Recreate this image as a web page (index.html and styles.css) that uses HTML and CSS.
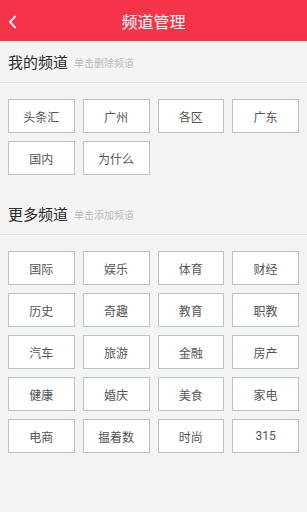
FILE: index.html
```html
<!DOCTYPE html>
<html lang="zh-CN">
<head>
    <meta charset="UTF-8">
    <meta name="viewport" content="width=device-width, initial-scale=1.0">
    <title>频道管理</title>
    <link rel="stylesheet" href="styles.css">
</head>
<body>

    <div class="topbar">
        <span class="back">
            <svg width="9" height="14" viewBox="0 0 9 14"><path d="M7.5 1.2 L2 7 L7.5 12.8" fill="none" stroke="#fff" stroke-width="1.8"/></svg>
        </span>
        <h1>频道管理</h1>
    </div>

    <div class="section-title">
        <span class="name">我的频道</span>
        <span class="hint">单击删除频道</span>
    </div>
    <div class="grid mine">
        <div class="tag">头条汇</div>
        <div class="tag">广州</div>
        <div class="tag">各区</div>
        <div class="tag">广东</div>
        <div class="tag">国内</div>
        <div class="tag">为什么</div>
    </div>

    <div class="section-title">
        <span class="name">更多频道</span>
        <span class="hint">单击添加频道</span>
    </div>
    <div class="grid">
        <div class="tag">国际</div>
        <div class="tag">娱乐</div>
        <div class="tag">体育</div>
        <div class="tag">财经</div>
        <div class="tag">历史</div>
        <div class="tag">奇趣</div>
        <div class="tag">教育</div>
        <div class="tag">职教</div>
        <div class="tag">汽车</div>
        <div class="tag">旅游</div>
        <div class="tag">金融</div>
        <div class="tag">房产</div>
        <div class="tag">健康</div>
        <div class="tag">婚庆</div>
        <div class="tag">美食</div>
        <div class="tag">家电</div>
        <div class="tag">电商</div>
        <div class="tag">揾着数</div>
        <div class="tag">时尚</div>
        <div class="tag">315</div>
    </div>

</body>
</html>
```

FILE: styles.css
```css
body {
    margin: 0;
    font-family: Roboto, "Noto Sans CJK SC", sans-serif;
    background-color: #f4f4f4;
    color: #333;
}

.topbar {
    position: relative;
    height: 41px;
    background-color: #f43548;
    display: flex;
    align-items: center;
    justify-content: center;
}

.topbar h1 {
    margin: 0;
    font-size: 16px;
    font-weight: normal;
    color: #fff;
}

.back {
    position: absolute;
    left: 8px;
    top: 15px;
    display: flex;
}

.section-title {
    height: 41px;
    display: flex;
    align-items: center;
    padding: 0 8px;
    border-bottom: 1px solid #dedede;
}

.section-title .name {
    font-size: 15px;
    color: #2a2a2a;
}

.section-title .hint {
    font-size: 10px;
    color: #bbb;
    margin-left: 6px;
    margin-top: 2px;
}

.grid {
    display: grid;
    grid-template-columns: repeat(4, 1fr);
    gap: 8px;
    padding: 16px 8px 18px;
}

.tag {
    height: 32px;
    background-color: #fff;
    border: 1px solid #b9c5cc;
    display: flex;
    align-items: center;
    justify-content: center;
    font-size: 12px;
    color: #555;
}
```
